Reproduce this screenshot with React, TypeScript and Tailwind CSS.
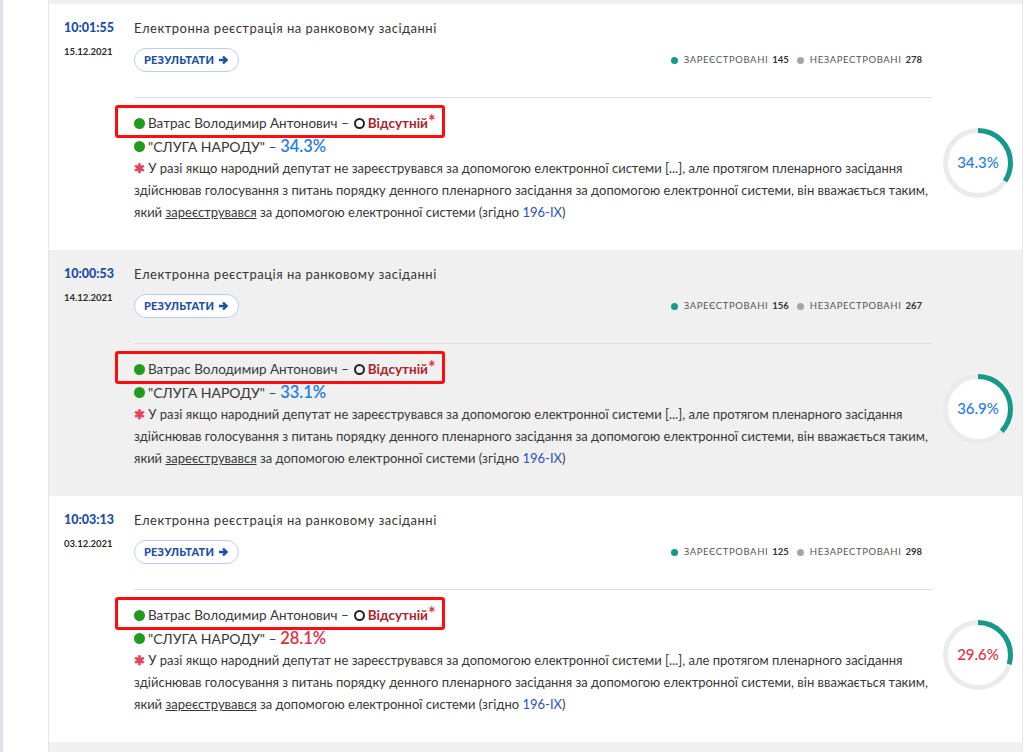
import React from "react"

type Session = {
    time: string
    date: string
    reg: number
    unreg: number
    party: string
    partyBad: boolean
    total: string
    totalBad: boolean
    gray: boolean
}

const sessions: Session[] = [
    { time: "10:01:55", date: "15.12.2021", reg: 145, unreg: 278, party: "34.3%", partyBad: false, total: "34.3%", totalBad: false, gray: false },
    { time: "10:00:53", date: "14.12.2021", reg: 156, unreg: 267, party: "33.1%", partyBad: false, total: "36.9%", totalBad: false, gray: true },
    { time: "10:03:13", date: "03.12.2021", reg: 125, unreg: 298, party: "28.1%", partyBad: true, total: "29.6%", totalBad: true, gray: false },
]

const Ring = ({ value, bad }: { value: string; bad: boolean }) => {
    const r = 32.5
    const c = 2 * Math.PI * r
    const pct = parseFloat(value) / 100
    return (
        <div className="relative w-[70px] h-[70px]">
            <svg width="70" height="70" viewBox="0 0 70 70" className="absolute left-0 top-0">
                <circle cx="35" cy="35" r={r} fill="#ffffff" stroke="#ebebeb" strokeWidth="5" />
                <circle
                    cx="35" cy="35" r={r} fill="none" stroke="#14998a" strokeWidth="5"
                    strokeDasharray={`${c * pct} ${c}`}
                    transform="rotate(-90 35 35)"
                />
            </svg>
            <div className={`absolute inset-0 flex items-center justify-center text-[15px] font-medium ${bad ? "text-[#e0303f]" : "text-[#1f7ee6]"}`}>
                {value}
            </div>
        </div>
    )
}

const Row = ({ s }: { s: Session }) => {
    return (
        <div className={`flex pt-4 pb-[27px] ${s.gray ? "bg-[#f0f0f0]" : "bg-white"}`}>
            <div className="w-[85px] pl-[15px] shrink-0">
                <div className="text-[12.5px] leading-4 font-black text-[#1d4ea6]">{s.time}</div>
                <div className="mt-[10px] text-[9.5px] leading-3 font-bold text-[#2b2b2b]">{s.date}</div>
            </div>
            <div className="flex-1">
                <div className="w-[798px] flex items-end justify-between">
                    <div>
                        <div className="text-[13px] leading-4 tracking-[0.5px] text-[#363636]">Електронна реєстрація на ранковому засіданні</div>
                        <button className="mt-3 h-6 px-[9px] rounded-full border border-[#b8cdef] bg-white flex items-center gap-[4px] text-[11px] font-black tracking-[0.2px] text-[#1d4ea6]">
                            РЕЗУЛЬТАТИ
                            <svg width="11" height="10" viewBox="0 0 11 10">
                                <path d="M1 5h7.5M5 1.5 8.6 5 5 8.5" stroke="#1d4ea6" strokeWidth="2.4" fill="none" />
                            </svg>
                        </button>
                    </div>
                    <div className="flex items-center h-6 pr-[10px] text-[9.5px] tracking-[0.6px] text-[#555]">
                        <span className="w-[7px] h-[7px] rounded-full bg-[#14998a] mr-[6px]"></span>
                        ЗАРЕЄСТРОВАНІ<b className="ml-1 text-[#333] tracking-normal">{s.reg}</b>
                        <span className="w-[7px] h-[7px] rounded-full bg-[#a5a5a5] ml-[8px] mr-[6px]"></span>
                        НЕЗАРЕСТРОВАНІ<b className="ml-1 text-[#333] tracking-normal">{s.unreg}</b>
                    </div>
                </div>
                <div className="flex">
                    <div className="w-[798px] mt-[25px] border-t border-[#dedede] pt-[13px] text-[#383838]">
                        <div className="relative inline-flex items-center h-[22px] text-[13.5px]">
                            <span className="absolute -left-[19px] -right-[9px] -top-[8px] -bottom-[3px] border-[3px] border-[#ff0d0d] rounded-[3px]"></span>
                            <span className="w-[11px] h-[11px] rounded-full bg-[#229a1e] mr-[3px]"></span>
                            Ватрас Володимир Антонович –
                            <span className="w-[11px] h-[11px] rounded-full border-2 border-[#222] ml-[5px] mr-[3px]"></span>
                            <b className="text-[#a8262d] font-bold">Відсутній</b>
                            <span className="text-[#e8303f] font-bold text-[18px] leading-none self-start -mt-[1px]">*</span>
                        </div>
                        <div className="flex items-center h-[22px] text-[14px]">
                            <span className="w-[11px] h-[11px] rounded-full bg-[#229a1e] mr-[3px]"></span>
                            "СЛУГА НАРОДУ" –&nbsp;
                            <span className={`text-[16.5px] font-semibold ${s.partyBad ? "text-[#e0303f]" : "text-[#1f7ee6]"}`}>{s.party}</span>
                        </div>
                        <p className="text-[13px] leading-[22px] whitespace-nowrap">
                            <span className="text-[#e6405a] font-bold">✱</span> У разі якщо народний депутат не зареєструвався за допомогою електронної системи [...], але протягом пленарного засідання<br />
                            здійснював голосування з питань порядку денного пленарного засідання за допомогою електронної системи, він вважається таким,<br />
                            який <span className="underline">зареєструвався</span> за допомогою електронної системи (згідно <span className="text-[#2a4fbf]">196-IX</span>)
                        </p>
                    </div>
                    <div className="flex-1 flex items-center justify-center pt-[30px] pl-[2px]">
                        <Ring value={s.total} bad={s.totalBad} />
                    </div>
                </div>
            </div>
        </div>
    )
}

const App = () => {
    return (
        <div className="w-[1035px] h-[752px] overflow-hidden flex bg-white" style={{ fontFamily: "Lato, 'Open Sans', sans-serif" }}>
            <div className="w-[3px] bg-[#dde3e8] shrink-0"></div>
            <div className="w-[45px] shrink-0"></div>
            <div className="w-[975px] border-l border-r border-[#e6e6e6] shrink-0 flex flex-col">
                <div className="h-1 bg-[#f0f0f0] shrink-0"></div>
                {sessions.map((s) => (
                    <Row key={s.time} s={s} />
                ))}
                <div className="flex-1 bg-[#f0f0f0]"></div>
            </div>
        </div>
    )
}

export default App
